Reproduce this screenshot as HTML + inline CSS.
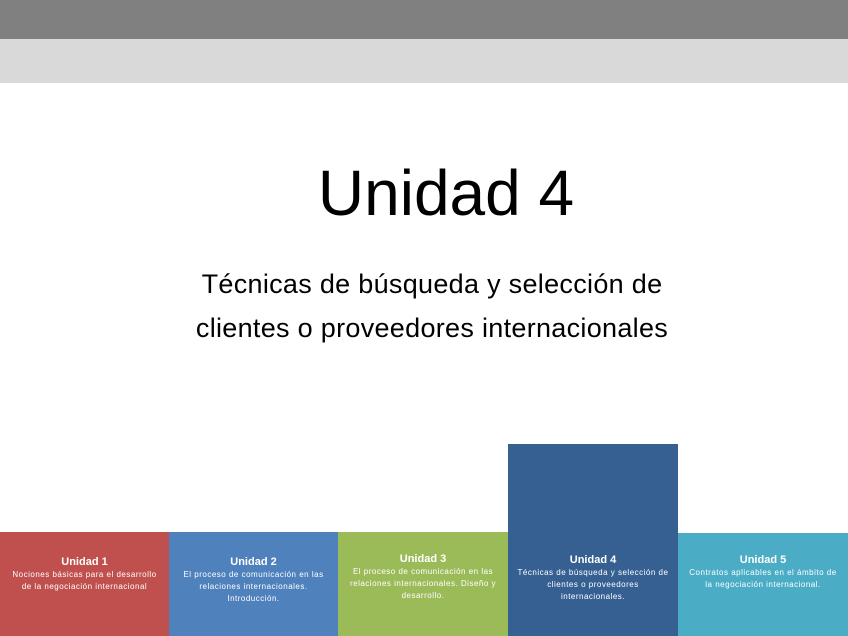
<!DOCTYPE html>
<html><head><meta charset="utf-8"><style>
body{margin:0;width:848px;height:636px;position:relative;background:#fff;overflow:hidden;font-family:"Liberation Sans",sans-serif}
.b{position:absolute;color:#fff;text-align:center}
.b h4{margin:0;font-size:11px;font-weight:bold;line-height:13px}
.b p{margin:0;font-size:8px;line-height:12px;letter-spacing:.5px;white-space:nowrap}
</style></head><body>
<div style="position:absolute;left:0;top:0;width:848px;height:39px;background:#808080"></div>
<div style="position:absolute;left:0;top:39px;width:848px;height:44px;background:#d9d9d9"></div>
<div style="position:absolute;left:0;width:848px;top:157px;text-align:center;padding-left:44px;box-sizing:border-box;font-size:64px;line-height:72px;color:#000">Unidad 4</div>
<div style="position:absolute;left:0;width:864px;top:262px;text-align:center;font-size:27px;line-height:44px;color:#000;letter-spacing:0.3px">Técnicas de búsqueda y selección de<br>clientes o proveedores internacionales</div>
<div class="b" style="left:0;top:532px;width:169px;height:104px;background:#c0504d"><div style="padding:24px 0 0"><h4>Unidad 1</h4><p>Nociones básicas para el desarrollo<br>de la negociación internacional</p></div></div>
<div class="b" style="left:169px;top:532px;width:169px;height:104px;background:#4f81bd"><div style="padding:24px 0 0"><h4>Unidad 2</h4><p>El proceso de comunicación en las<br>relaciones internacionales.<br>Introducción.</p></div></div>
<div class="b" style="left:338px;top:532px;width:170px;height:104px;background:#9bbb59"><div style="padding:21px 0 0"><h4>Unidad 3</h4><p>El proceso de comunicación en las<br>relaciones internacionales. Diseño y<br>desarrollo.</p></div></div>
<div class="b" style="left:508px;top:444px;width:170px;height:192px;background:#366092"><div style="padding:110px 0 0"><h4>Unidad 4</h4><p>Técnicas de búsqueda y selección de<br>clientes o proveedores<br>internacionales.</p></div></div>
<div class="b" style="left:678px;top:533px;width:170px;height:103px;background:#4bacc6"><div style="padding:21px 0 0"><h4>Unidad 5</h4><p>Contratos aplicables en el ámbito de<br>la negociación internacional.</p></div></div>
</body></html>
